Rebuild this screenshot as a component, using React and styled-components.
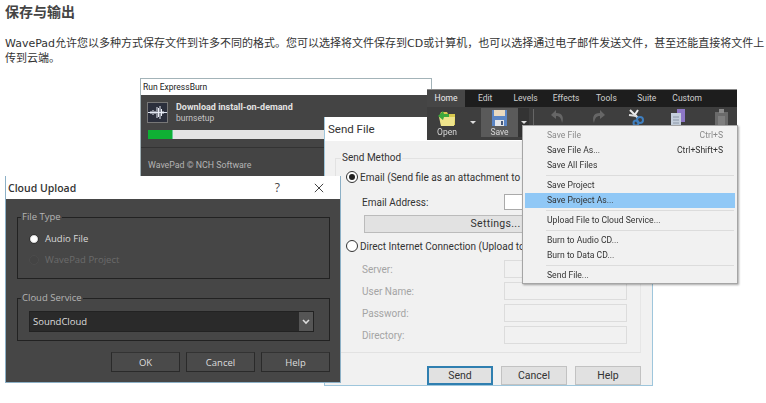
import React from 'react';
import styled, { createGlobalStyle } from 'styled-components';

const Global = createGlobalStyle`
  html, body { margin: 0; padding: 0; background: #fff; }
  body { font-family: "DejaVu Sans", "Noto Sans CJK SC", sans-serif; overflow: hidden; }
`;
const UI = `Roboto, "Noto Sans", sans-serif`;

const Page = styled.div`width: 766px; height: 403px; overflow: hidden; padding-left: 5px; box-sizing: border-box;`;
const Heading = styled.h2`
  margin: 0; padding-top: 3px; height: 31px; box-sizing: border-box;
  font: bold 14px/16px "Noto Sans CJK SC", sans-serif; color: #444;
`;
const Intro = styled.p`
  margin: 0; width: 760px; height: 37px; font: 11px/15px "DejaVu Sans", "Noto Sans CJK SC", sans-serif; color: #333;
  padding-top: 5px; box-sizing: border-box;
`;
const Canvas = styled.div`
  position: relative; margin-left: -5px; width: 766px; height: 335px; overflow: hidden;
  font-family: ${UI}; filter: blur(0.35px);
`;
const ORIGIN = 68;
const Win = styled.section`
  position: absolute; box-sizing: border-box;
  left: ${p => p.$x}px; top: ${p => p.$y - ORIGIN}px; width: ${p => p.$w}px; height: ${p => p.$h}px;
  z-index: ${p => p.$z};
`;

/* Run ExpressBurn */
const RunWin = styled(Win)`background: #444; border: 1px solid #a3b3b8; border-bottom: 0; display: flex; flex-direction: column;`;
const RunTitle = styled.div`height: 16px; background: #fff; font-size: 8.5px; line-height: 16px; color: #222; padding-left: 2px;`;
const RunHead = styled.div`display: flex; gap: 8px; padding: 7px 0 0 6px; height: 21px;`;
const AppIcon = styled.div`width: 21px; height: 21px; background: #2b2f3c; border: 1px solid #777; box-sizing: border-box; display: flex;`;
const RunText = styled.div`display: flex; flex-direction: column; color: #ddd;`;
const RunName = styled.div`font-size: 9px; font-weight: 700; line-height: 10px; color: #e2e2e2;`;
const RunSub = styled.div`font-size: 8.5px; line-height: 13px; color: #c4c4c4;`;
const Track = styled.div`margin: 7px 0 0 7px; height: 9px; background: #e4e4e4; display: flex; width: 280px; border: 0;`;
const Fill = styled.div`width: 24px; background: #0fb034; box-shadow: 1px 0 0 #6c9;`;
const RunRule = styled.div`margin-top: 8px; height: 1px; background: #333;`;
const RunFoot = styled.div`padding: 10px 0 0 7px; font-size: 8.8px; line-height: 14px; color: #b4b4b4;`;

/* Send File */
const SendWin = styled(Win)`background: #f1f1f1; border: 1px solid #9ec6dc; border-top: 0; display: flex; flex-direction: column;`;
const SendTitle = styled.div`height: 24px; flex: none; background: #fff; font-size: 11.5px; line-height: 24px; color: #333; padding-left: 3px;`;
const SendBody = styled.div`padding: 10px 11px 0 10px; display: flex; flex-direction: column; color: #333;`;
const SendGroup = styled.fieldset`
  margin: 0; padding: 4px 13px 0 10px; border: 1px solid #e2e2e2; border-right-color: #e6e6e6;
  height: 202px; box-sizing: border-box; min-width: 0; display: block;
`;
const SendLegend = styled.legend`margin-left: -5px; padding: 0 1px; font-size: 10px; line-height: 14px; color: #333;`;
const RadioRow = styled.div`display: flex; align-items: center; gap: 2px; height: 16px; margin-top: ${p => p.$mt}px; font-size: 10px; white-space: nowrap;`;
const LightRadio = styled.span`
  width: 12px; height: 12px; flex: none; border: 1px solid #333; border-radius: 50%; background: #fff; box-sizing: border-box;
  display: flex; align-items: center; justify-content: center;
  &::after { content: ""; width: 6px; height: 6px; border-radius: 50%; background: ${p => p.$on ? '#222' : 'transparent'}; }
`;
const FieldRow = styled.div`
  display: flex; justify-content: space-between; align-items: center; padding-left: 16px;
  height: ${p => p.$h}px; margin-top: ${p => p.$mt}px;
  font-size: 10px; color: ${p => p.$off ? '#a4a4a4' : '#333'};
`;
const LightInput = styled.div`width: 123px; height: 100%; box-sizing: border-box; background: ${p => p.$off ? '#f1f1f1' : '#fff'}; border: 1px solid ${p => p.$off ? '#dcdcdc' : '#aaa'};`;
const SettingsBtn = styled.div`
  margin: 5px 0 0 18px; height: 18px; box-sizing: border-box; background: #e2e2e2; border: 1px solid #bbb;
  font-size: 10.5px; line-height: 16px; text-align: center; color: #333; letter-spacing: 0.3px;
`;
const SendFoot = styled.div`display: flex; justify-content: flex-end; gap: 8px; margin-top: 13px;`;
const LightBtn = styled.div`
  width: 66px; height: 19px; box-sizing: border-box; background: #e1e1e1; border: ${p => p.$def ? '2px solid #2f7fb0' : '1px solid #c2c2c2'};
  font-size: 10.5px; line-height: ${p => p.$def ? 15 : 17}px; text-align: center; color: #333;
`;

/* Ribbon */
const Ribbon = styled(Win)`background: #3e3e3e; display: flex; flex-direction: column; overflow: hidden; border-top: 1px solid #888;`;
const Tabs = styled.div`display: flex; height: 17px; background: #1d1d1d;`;
const Tab = styled.div`
  width: ${p => p.$w}px; flex: none; text-align: center; font-size: 8.5px; line-height: 17px;
  color: ${p => p.$on ? '#eee' : '#cfcfcf'}; background: ${p => p.$on ? '#464646' : 'transparent'};
`;
const Tools = styled.div`display: flex; flex: 1; align-items: stretch; padding: 1px 0 3px 2px; border-left: 0;`;
const ToolBtn = styled.div`
  width: ${p => p.$w}px; flex: none; display: flex; flex-direction: column; align-items: center;
  background: ${p => p.$hot ? '#5a5a5a' : 'transparent'}; font-size: 8.5px; line-height: 10px; color: #d8d8d8; padding-top: 1px; box-sizing: border-box;
`;
const DropArrow = styled.div`
  width: ${p => p.$w}px; flex: none; display: flex; align-items: center; justify-content: center; background: ${p => p.$hot ? '#333' : 'transparent'};
  &::after { content: ""; border: 3px solid transparent; border-top: 3px solid #ddd; border-bottom: 0; }
`;
const ToolRule = styled.div`width: 1px; margin: 1px 4px 0 4px; background: #666; flex: none;`;

/* Menu */
const Menu = styled(Win)`background: #f1f1f1; border: 1px solid #a5a5a5; box-shadow: 1px 1px 2px rgba(0,0,0,.35); padding: 2px 1px 0; display: flex; flex-direction: column;`;
const MenuItem = styled.div`
  display: flex; justify-content: space-between; height: 15px; flex: none; margin: 0 1px; padding: 0 12px 0 22px;
  font-size: 8.6px; line-height: 15px; color: ${p => p.$off ? '#8a8a8a' : '#333'};
  background: ${p => p.$hot ? '#90c8f6' : 'transparent'};
`;
const MenuRule = styled.div`height: 1px; flex: none; margin: 2px 2px 2px 22px; background: #dcdcdc;`;

/* Cloud */
const CloudWin = styled(Win)`background: #464646; border: 1px solid #8cb0c6; border-top: 0; display: flex; flex-direction: column; font-family: "Open Sans", sans-serif;`;
const CloudTitle = styled.div`
  height: 23px; flex: none; background: #fff; color: #333; display: flex; align-items: center; justify-content: space-between;
  padding: 0 16px 0 2px; font-size: 10.5px; font-weight: 600;
`;
const TitleBtns = styled.div`display: flex; align-items: center; gap: 34px; font-weight: 400; font-size: 12px; color: #444;`;
const CloudBody = styled.div`padding: 12px 10px 0 11px; display: flex; flex-direction: column;`;
const DarkGroup = styled.fieldset`
  margin: 0; padding: ${p => p.$pad}; border: 1px solid #222;
  height: ${p => p.$h}px; box-sizing: border-box; min-width: 0; margin-top: ${p => p.$mt}px;
`;
const DarkLegend = styled.legend`margin-left: -8px; padding: 0 1px; font-size: 9.5px; line-height: 12px; color: #b4b4b4;`;
const DarkRadioRow = styled.div`display: flex; align-items: center; gap: 6px; height: 21px; font-size: 9.5px; color: ${p => p.$off ? '#6b6b6b' : '#d8d8d8'};`;
const DarkRadio = styled.span`
  width: 10px; height: 10px; border-radius: 50%; flex: none; background: ${p => p.$off ? '#444' : 'radial-gradient(circle, #fff 45%, #999 100%)'};
  border: 1px solid ${p => p.$off ? '#4c4c4c' : '#333'}; box-sizing: border-box;
`;
const Select = styled.div`display: flex; height: 21px; background: #555; border: 1px solid #222; box-sizing: border-box; width: 285px;`;
const SelectValue = styled.div`flex: 1; background: #2a2a2a; color: #ddd; font-size: 9.5px; line-height: 19px; padding-left: 3px;`;
const SelectBtn = styled.div`width: 14px; display: flex; align-items: center; justify-content: center;`;
const CloudFoot = styled.div`display: flex; justify-content: flex-end; gap: 6px; margin-top: 11px;`;
const DarkBtn = styled.div`
  width: 69px; height: 20px; box-sizing: border-box; background: #4a4a4a; border: 1px solid #2a2a2a; border-top-color: #333;
  font-size: 9.5px; line-height: 20px; text-align: center; color: #ddd;
`;

const Wave = () => (
  <svg width="19" height="19" viewBox="0 0 19 19">
    <path d="M0 9.5h19" stroke="#dfe6f2" strokeWidth="1" />
    <path d="M3 8v3M5 7v5M7 8v3M9 4v11M10.5 5v9M12 3v13M13.5 6v7M15 8v3" stroke="#e8ecf5" strokeWidth="1" />
  </svg>
);
const OpenIcon = () => (
  <svg width="22" height="18" viewBox="0 0 22 18">
    <path d="M4 6l1-3h6l1 2h7v11H5z" fill="#d9c94e" />
    <path d="M3 8h16l-1 9H5z" fill="#efe48c" />
    <path d="M2 7l5-5 1 3h5v3H8l-1 3z" fill="#3ea83c" />
  </svg>
);
const SaveIcon = () => (
  <svg width="17" height="18" viewBox="0 0 17 18">
    <path d="M1 1h15v16H1z" fill="#5b85c4" />
    <path d="M3 1h11v6H3z" fill="#e9d9bf" />
    <path d="M4 11h9v6H4z" fill="#e4e6ea" />
    <path d="M10 12h2v4h-2z" fill="#46597c" />
  </svg>
);
const Undo = ({ flip }) => (
  <svg width="16" height="15" viewBox="0 0 16 15" style={flip ? { transform: 'scaleX(-1)' } : undefined}>
    <path d="M6 1L1 6l5 4V7c3 0 5 1 6 7 2-5 1-10-6-10z" fill="#666" />
  </svg>
);
const Cut = () => (
  <svg width="18" height="17" viewBox="0 0 18 17">
    <path d="M2 1l8 8M10 1L6 7" stroke="#eee" strokeWidth="2" fill="none" />
    <path d="M1 6l8 1" stroke="#ddd" strokeWidth="2" />
    <circle cx="12" cy="11" r="3" fill="none" stroke="#3f7fc0" strokeWidth="2" />
    <circle cx="8" cy="14" r="2.5" fill="none" stroke="#3f7fc0" strokeWidth="2" />
  </svg>
);
const Copy = () => (
  <svg width="17" height="18" viewBox="0 0 17 18">
    <path d="M7 0h8v13H7z" fill="#8c76c4" />
    <path d="M1 4h10v14H1z" fill="#c5cfdc" />
    <path d="M3 8h6M3 11h6M3 14h6" stroke="#8a96a6" />
  </svg>
);
const Paste = () => (
  <svg width="15" height="18" viewBox="0 0 15 18">
    <path d="M1 3h13v15H1z" fill="#6a6a6a" />
    <path d="M5 0h5v4H5z" fill="#8a8a8a" />
    <path d="M4 7h7v9H4z" fill="#7e7e7e" />
  </svg>
);
const Chevron = () => (
  <svg width="8" height="6" viewBox="0 0 8 6"><path d="M1 1l3 3 3-3" stroke="#ddd" strokeWidth="1.6" fill="none" /></svg>
);
const CloseX = () => (
  <svg width="10" height="10" viewBox="0 0 12 12"><path d="M1 1l10 10M11 1L1 11" stroke="#444" strokeWidth="1.2" /></svg>
);

export default function App() {
  const fields = [['Server:', 6], ['User Name:', 4], ['Password:', 4], ['Directory:', 4]];
  const tabs = ['Edit', 'Levels', 'Effects', 'Tools', 'Suite', 'Custom'];
  return (
    <Page>
      <Global />
      <Heading>保存与输出</Heading>
      <Intro>WavePad允许您以多种方式保存文件到许多不同的格式。您可以选择将文件保存到CD或计算机，也可以选择通过电子邮件发送文件，甚至还能直接将文件上传到云端。</Intro>
      <Canvas>
        <RunWin $x={140} $y={78} $w={292} $h={100} $z={1}>
          <RunTitle>Run ExpressBurn</RunTitle>
          <RunHead>
            <AppIcon><Wave /></AppIcon>
            <RunText>
              <RunName>Download install-on-demand</RunName>
              <RunSub>burnsetup</RunSub>
            </RunText>
          </RunHead>
          <Track><Fill /></Track>
          <RunRule />
          <RunFoot>WavePad © NCH Software</RunFoot>
        </RunWin>

        <SendWin $x={324} $y={117} $w={329} $h={269} $z={2}>
          <SendTitle>Send File</SendTitle>
          <SendBody>
            <SendGroup>
              <SendLegend>Send Method</SendLegend>
              <RadioRow $mt={0}><LightRadio $on />Email (Send file as an attachment to a</RadioRow>
              <FieldRow $h={16} $mt={9}>Email Address:<LightInput /></FieldRow>
              <SettingsBtn>Settings...</SettingsBtn>
              <RadioRow $mt={5}><LightRadio />Direct Internet Connection (Upload to</RadioRow>
              {fields.map(([name, mt]) => (
                <FieldRow key={name} $h={18} $mt={mt} $off>{name}<LightInput $off /></FieldRow>
              ))}
            </SendGroup>
            <SendFoot>
              <LightBtn $def>Send</LightBtn>
              <LightBtn>Cancel</LightBtn>
              <LightBtn>Help</LightBtn>
            </SendFoot>
          </SendBody>
        </SendWin>

        <Ribbon $x={427} $y={89} $w={310} $h={51} $z={3}>
          <Tabs>
            <Tab $w={38} $on>Home</Tab>
            {tabs.map(t => <Tab key={t} $w={40.4}>{t}</Tab>)}
          </Tabs>
          <Tools>
            <ToolBtn $w={36}><OpenIcon />Open</ToolBtn>
            <DropArrow $w={16} />
            <ToolBtn $w={37} $hot><SaveIcon />Save</ToolBtn>
            <DropArrow $w={11} $hot />
            <ToolRule />
            <ToolBtn $w={40}><Undo /></ToolBtn>
            <ToolBtn $w={39}><Undo flip /></ToolBtn>
            <ToolBtn $w={40}><Cut /></ToolBtn>
            <ToolBtn $w={43}><Copy /></ToolBtn>
            <ToolBtn $w={42}><Paste /></ToolBtn>
          </Tools>
        </Ribbon>

        <Menu $x={522} $y={125} $w={216} $h={159} $z={4}>
          <MenuItem $off><span>Save File</span><span>Ctrl+S</span></MenuItem>
          <MenuItem><span>Save File As...</span><span>Ctrl+Shift+S</span></MenuItem>
          <MenuItem>Save All Files</MenuItem>
          <MenuRule />
          <MenuItem>Save Project</MenuItem>
          <MenuItem $hot>Save Project As...</MenuItem>
          <MenuRule />
          <MenuItem>Upload File to Cloud Service...</MenuItem>
          <MenuRule />
          <MenuItem>Burn to Audio CD...</MenuItem>
          <MenuItem>Burn to Data CD...</MenuItem>
          <MenuRule />
          <MenuItem>Send File...</MenuItem>
        </Menu>

        <CloudWin $x={5} $y={176} $w={336} $h={207} $z={5}>
          <CloudTitle>
            Cloud Upload
            <TitleBtns>?<CloseX /></TitleBtns>
          </CloudTitle>
          <CloudBody>
            <DarkGroup $h={68} $pad="5px 0 0 11px" $mt={0}>
              <DarkLegend>File Type</DarkLegend>
              <DarkRadioRow><DarkRadio />Audio File</DarkRadioRow>
              <DarkRadioRow $off><DarkRadio $off />WavePad Project</DarkRadioRow>
            </DarkGroup>
            <DarkGroup $h={49} $pad="7px 0 0 11px" $mt={13}>
              <DarkLegend>Cloud Service</DarkLegend>
              <Select>
                <SelectValue>SoundCloud</SelectValue>
                <SelectBtn><Chevron /></SelectBtn>
              </Select>
            </DarkGroup>
            <CloudFoot>
              <DarkBtn>OK</DarkBtn>
              <DarkBtn>Cancel</DarkBtn>
              <DarkBtn>Help</DarkBtn>
            </CloudFoot>
          </CloudBody>
        </CloudWin>
      </Canvas>
    </Page>
  );
}
